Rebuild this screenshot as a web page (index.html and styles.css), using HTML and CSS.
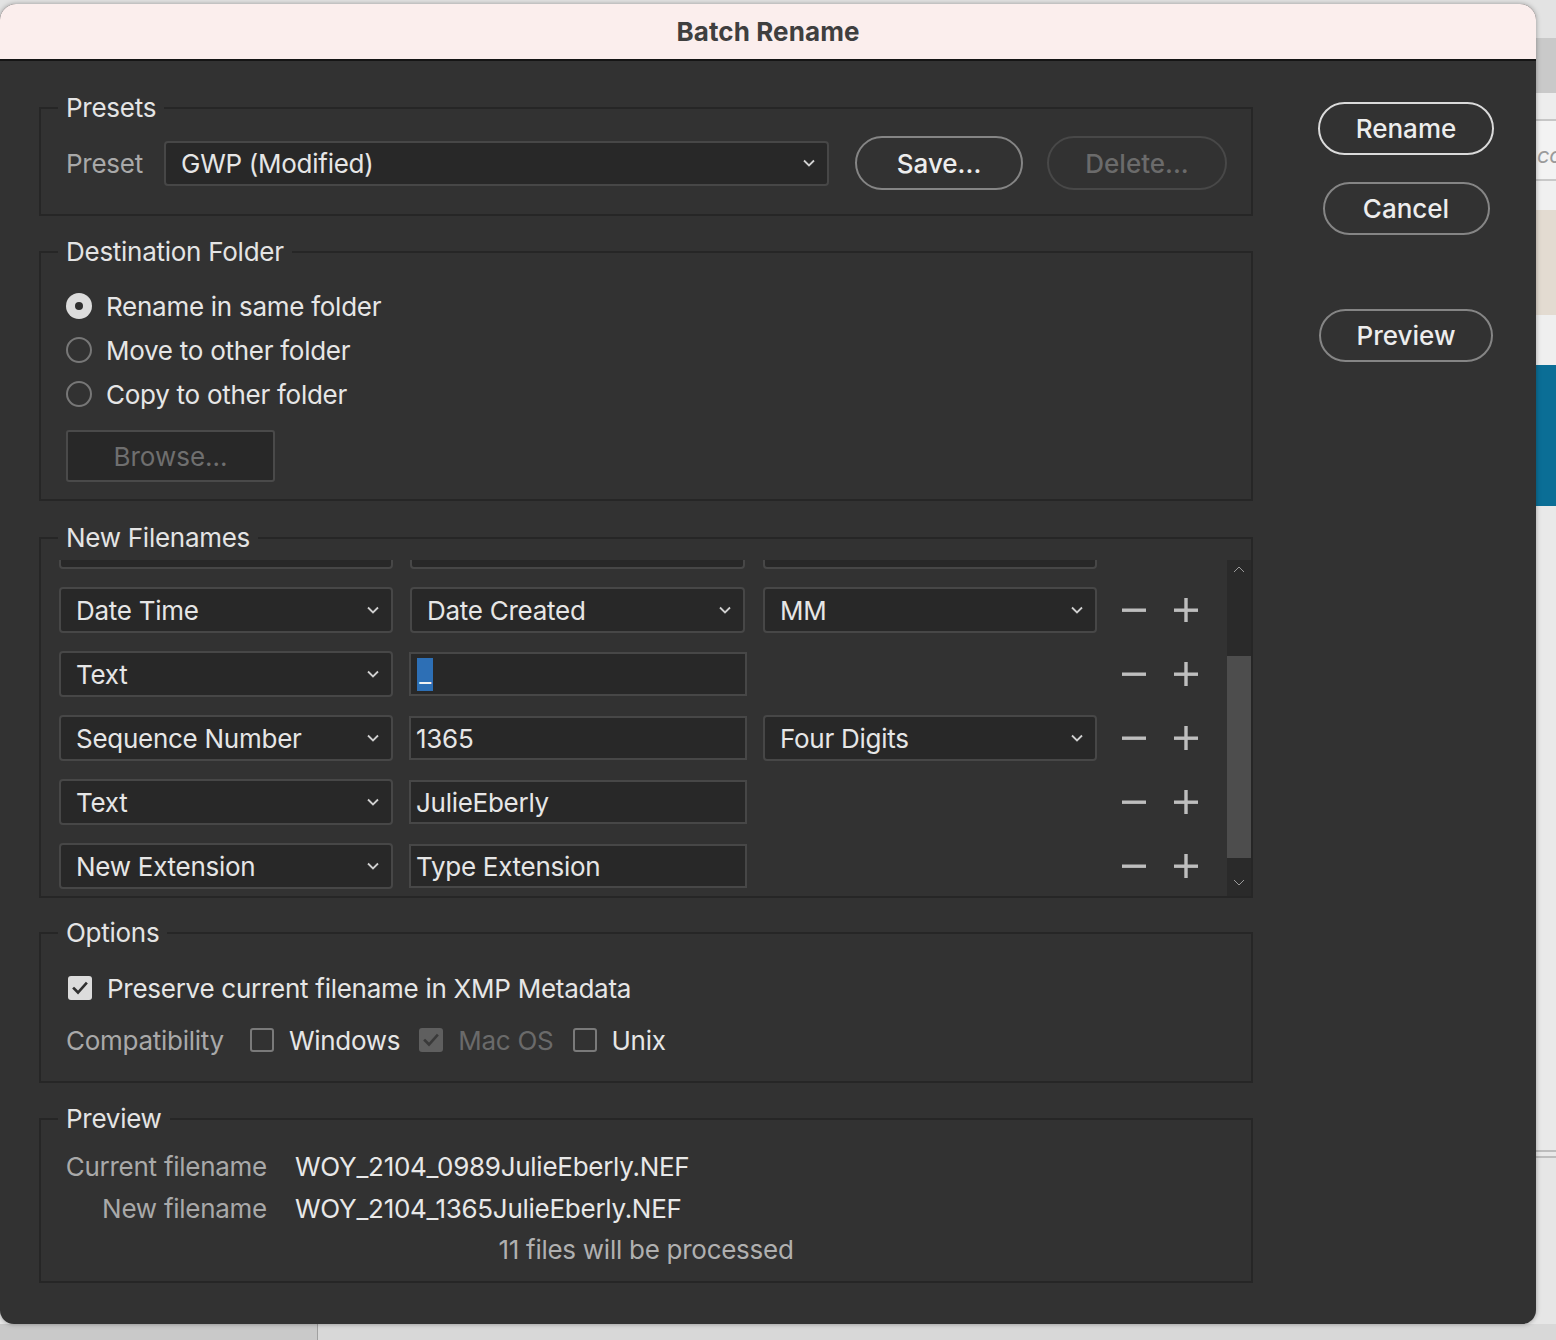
FILE: index.html
```html
<!DOCTYPE html>
<html lang="en">
<head>
<meta charset="utf-8">
<title>Batch Rename</title>
<link rel="stylesheet" href="styles.css">
</head>
<body>
<span class="backdrop-text">co</span>
<div class="dialog">
  <div class="titlebar">Batch Rename</div>
  <div class="dlg-body">
    <div class="groups">

      <fieldset class="group g-presets">
        <legend>Presets</legend>
        <div class="preset-row">
          <span class="lbl">Preset</span>
          <div class="select preset-select"><span>GWP (Modified)</span>
            <svg class="chev" viewBox="0 0 12 8" width="12" height="8"><path d="M1 1.5L6 6.5L11 1.5"/></svg>
          </div>
          <button class="pill save">Save...</button>
          <button class="pill off delete">Delete...</button>
        </div>
      </fieldset>

      <fieldset class="group g-dest">
        <legend>Destination Folder</legend>
        <div class="dest-inner">
          <div class="radio-row"><span class="radio on"></span><span>Rename in same folder</span></div>
          <div class="radio-row"><span class="radio"></span><span>Move to other folder</span></div>
          <div class="radio-row"><span class="radio"></span><span>Copy to other folder</span></div>
          <button class="browse">Browse...</button>
        </div>
      </fieldset>

      <fieldset class="group g-names">
        <legend>New Filenames</legend>
        <div class="scroller">
          <div class="rows">
            <div class="row" aria-hidden="true">
              <div class="select c1"><span></span><svg class="chev" viewBox="0 0 12 8" width="12" height="8"><path d="M1 1.5L6 6.5L11 1.5"/></svg></div>
              <div class="select c2"><span></span><svg class="chev" viewBox="0 0 12 8" width="12" height="8"><path d="M1 1.5L6 6.5L11 1.5"/></svg></div>
              <div class="select c3"><span></span><svg class="chev" viewBox="0 0 12 8" width="12" height="8"><path d="M1 1.5L6 6.5L11 1.5"/></svg></div>
              <svg class="pm minus" viewBox="0 0 24 24" width="24" height="24"><rect x="0" y="10.5" width="24" height="3.4"/></svg>
              <svg class="pm plus" viewBox="0 0 24 24" width="24" height="24"><rect x="0" y="10.5" width="24" height="3.4"/><rect x="10.3" y="0" width="3.4" height="24"/></svg>
            </div>
            <div class="row">
              <div class="select c1"><span>Date Time</span><svg class="chev" viewBox="0 0 12 8" width="12" height="8"><path d="M1 1.5L6 6.5L11 1.5"/></svg></div>
              <div class="select c2"><span>Date Created</span><svg class="chev" viewBox="0 0 12 8" width="12" height="8"><path d="M1 1.5L6 6.5L11 1.5"/></svg></div>
              <div class="select c3"><span>MM</span><svg class="chev" viewBox="0 0 12 8" width="12" height="8"><path d="M1 1.5L6 6.5L11 1.5"/></svg></div>
              <svg class="pm minus" viewBox="0 0 24 24" width="24" height="24"><rect x="0" y="10.5" width="24" height="3.4"/></svg>
              <svg class="pm plus" viewBox="0 0 24 24" width="24" height="24"><rect x="0" y="10.5" width="24" height="3.4"/><rect x="10.3" y="0" width="3.4" height="24"/></svg>
            </div>
            <div class="row">
              <div class="select c1"><span>Text</span><svg class="chev" viewBox="0 0 12 8" width="12" height="8"><path d="M1 1.5L6 6.5L11 1.5"/></svg></div>
              <div class="field c2"><span class="sel">_</span></div>
              <div class="spacer c3"></div>
              <svg class="pm minus" viewBox="0 0 24 24" width="24" height="24"><rect x="0" y="10.5" width="24" height="3.4"/></svg>
              <svg class="pm plus" viewBox="0 0 24 24" width="24" height="24"><rect x="0" y="10.5" width="24" height="3.4"/><rect x="10.3" y="0" width="3.4" height="24"/></svg>
            </div>
            <div class="row">
              <div class="select c1"><span>Sequence Number</span><svg class="chev" viewBox="0 0 12 8" width="12" height="8"><path d="M1 1.5L6 6.5L11 1.5"/></svg></div>
              <div class="field c2"><span>1365</span></div>
              <div class="select c3"><span>Four Digits</span><svg class="chev" viewBox="0 0 12 8" width="12" height="8"><path d="M1 1.5L6 6.5L11 1.5"/></svg></div>
              <svg class="pm minus" viewBox="0 0 24 24" width="24" height="24"><rect x="0" y="10.5" width="24" height="3.4"/></svg>
              <svg class="pm plus" viewBox="0 0 24 24" width="24" height="24"><rect x="0" y="10.5" width="24" height="3.4"/><rect x="10.3" y="0" width="3.4" height="24"/></svg>
            </div>
            <div class="row">
              <div class="select c1"><span>Text</span><svg class="chev" viewBox="0 0 12 8" width="12" height="8"><path d="M1 1.5L6 6.5L11 1.5"/></svg></div>
              <div class="field c2"><span>JulieEberly</span></div>
              <div class="spacer c3"></div>
              <svg class="pm minus" viewBox="0 0 24 24" width="24" height="24"><rect x="0" y="10.5" width="24" height="3.4"/></svg>
              <svg class="pm plus" viewBox="0 0 24 24" width="24" height="24"><rect x="0" y="10.5" width="24" height="3.4"/><rect x="10.3" y="0" width="3.4" height="24"/></svg>
            </div>
            <div class="row">
              <div class="select c1"><span>New Extension</span><svg class="chev" viewBox="0 0 12 8" width="12" height="8"><path d="M1 1.5L6 6.5L11 1.5"/></svg></div>
              <div class="field c2"><span>Type Extension</span></div>
              <div class="spacer c3"></div>
              <svg class="pm minus" viewBox="0 0 24 24" width="24" height="24"><rect x="0" y="10.5" width="24" height="3.4"/></svg>
              <svg class="pm plus" viewBox="0 0 24 24" width="24" height="24"><rect x="0" y="10.5" width="24" height="3.4"/><rect x="10.3" y="0" width="3.4" height="24"/></svg>
            </div>
          </div>
          <div class="scrollbar">
            <svg class="sb-arrow" viewBox="0 0 12 7" width="12" height="7"><path d="M1 6L6 1L11 6"/></svg>
            <div class="thumb"></div>
            <svg class="sb-arrow down" viewBox="0 0 12 7" width="12" height="7"><path d="M1 1L6 6L11 1"/></svg>
          </div>
        </div>
      </fieldset>

      <fieldset class="group g-options">
        <legend>Options</legend>
        <div class="opt-row">
          <span class="cb on"><svg viewBox="0 0 24 24" width="24" height="24"><path d="M6 12.5L10 16.5L18 7.5"/></svg></span>
          <span class="cb-text">Preserve current filename in XMP Metadata</span>
        </div>
        <div class="opt-row compat">
          <span class="lbl">Compatibility</span>
          <span class="cb"></span><span class="cb-text">Windows</span>
          <span class="cb dis"><svg viewBox="0 0 24 24" width="24" height="24"><path d="M6 12.5L10 16.5L18 7.5"/></svg></span><span class="cb-text dim">Mac OS</span>
          <span class="cb"></span><span class="cb-text">Unix</span>
        </div>
      </fieldset>

      <fieldset class="group g-preview">
        <legend>Preview</legend>
        <div class="pv-grid">
          <span class="lbl">Current filename</span><span class="val">WOY_2104_0989JulieEberly.NEF</span>
          <span class="lbl">New filename</span><span class="val">WOY_2104_1365JulieEberly.NEF</span>
        </div>
        <div class="pv-count">11 files will be processed</div>
      </fieldset>

    </div>
    <div class="actions">
      <button class="pill main rename">Rename</button>
      <button class="pill cancel">Cancel</button>
      <button class="pill preview">Preview</button>
    </div>
  </div>
</div>
</body>
</html>
```
FILE: styles.css
```css
* { box-sizing: border-box; }

body {
  margin: 0;
  width: 1556px;
  height: 1340px;
  overflow: hidden;
  position: relative;
  font-family: Inter, "Noto Sans", sans-serif;
  font-size: 26px;
  letter-spacing: -0.27px;
  color: #e6e6e6;
  background:
    linear-gradient(to right, #c9c9c9 0 317px, #a0a0a0 317px 318px, #d8d8d8 318px) left bottom / 100% 16px no-repeat,
    linear-gradient(to bottom,
      #e3e3e3 0 38px, #c9c9c9 38px 93px, #ededed 93px 119px, #c6c6c6 119px 121px,
      #f3f3f3 121px 179px, #c8c8c8 179px 181px, #f0f0f0 181px 210px,
      #e3dbd1 210px 315px, #efefef 315px 365px, #0b6e96 365px 506px,
      #e9e9e9 506px 1150px, #bdbdbd 1150px 1152px, #e9e9e9 1152px 1156px,
      #bdbdbd 1156px 1158px, #e6e6e6 1158px);
}

.backdrop-text {
  position: absolute;
  left: 1537px;
  top: 142px;
  font-size: 22px;
  font-style: italic;
  color: #9a9a9a;
}

.dialog {
  width: 1536px;
  height: 1320px;
  margin-top: 4px;
  background: #323232;
  border-radius: 16px 16px 14px 14px;
  overflow: hidden;
  box-shadow: 0 0 5px rgba(0, 0, 0, 0.35);
  display: flex;
  flex-direction: column;
}

.titlebar {
  flex: none;
  height: 57px;
  background: #fbeeed;
  border-bottom: 2px solid #151515;
  display: flex;
  align-items: center;
  justify-content: center;
  font-weight: 700;
  font-size: 26px;
  letter-spacing: 0.1px;
  color: #3f3f3f;
}

.dlg-body {
  flex: 1;
  display: flex;
  padding-left: 39px;
}

.groups {
  width: 1214px;
  padding-top: 32px;
  display: flex;
  flex-direction: column;
}

.group {
  margin: 0;
  padding: 0;
  min-width: 0;
  border: 2px solid #262626;
}

.group legend {
  margin-left: 17px;
  padding: 0 8px;
  font-size: 26px;
  line-height: 30px;
  color: #e4e4e4;
}

.lbl { color: #a9a9a9; }

/* Presets */
.preset-row {
  display: flex;
  align-items: center;
  padding: 13px 0 24px 25px;
}
.preset-row .lbl { width: 77px; flex: none; }
.preset-select {
  width: 665px;
  height: 45px;
  margin-left: 21px;
}
.pill {
  font: inherit;
  font-weight: 500;
  color: #ededed;
  background: transparent;
  border: 2px solid #858585;
  border-radius: 28px;
  height: 54px;
  padding: 0;
}
.save { width: 168px; margin-left: 26px; }
.delete { width: 180px; margin-left: 24px; }
.pill.off { color: #6b6b6b; border-color: #484848; }

/* selects / fields */
.select {
  display: flex;
  align-items: center;
  justify-content: space-between;
  background: #282828;
  border: 2px solid #474747;
  border-radius: 4px;
  padding: 0 12px 0 15px;
  color: #e6e6e6;
  flex: none;
}
.chev {
  fill: none;
  stroke: #d0d0d0;
  stroke-width: 1.8;
}

/* Destination */
.g-dest { margin-top: 21px; }
.dest-inner { padding: 17px 0 17px 25px; }
.radio-row {
  height: 44px;
  display: flex;
  align-items: center;
  gap: 14px;
}
.radio {
  width: 26px;
  height: 26px;
  border-radius: 50%;
  border: 2px solid #777;
  flex: none;
  display: flex;
  align-items: center;
  justify-content: center;
}
.radio.on {
  border: none;
  background: #dcdcdc;
}
.radio.on::after {
  content: "";
  width: 8px;
  height: 8px;
  border-radius: 50%;
  background: #2e2e2e;
}
.browse {
  display: block;
  margin-top: 14px;
  width: 209px;
  height: 52px;
  background: #282828;
  border: 2px solid #4a4a4a;
  border-radius: 3px;
  font: inherit;
  color: #6f6f6f;
  padding: 0;
}

/* New filenames */
.g-names { margin-top: 22px; padding: 7px 0 0 0; }
.scroller {
  height: 336px;
  overflow: hidden;
  display: flex;
}
.rows {
  flex: 1;
  margin-top: -37px;
  display: flex;
  flex-direction: column;
  gap: 18px;
}
.row {
  display: flex;
  align-items: center;
  padding-left: 18px;
  height: 46px;
}
.row .select { height: 46px; }
.c1 { width: 334px; }
.c2 { width: 335px; margin-left: 17px; }
.c3 { width: 334px; margin-left: 18px; flex: none; }
.field {
  flex: none;
  height: 44px;
  width: 338px;
  margin-left: 16px;
  margin-right: -2px;
  background: #282828;
  border: 2px solid #474747;
  padding-left: 5px;
  display: flex;
  align-items: center;
  color: #e6e6e6;
}
.sel {
  background: #2d6fb5;
  color: #f2f2f2;
  width: 16px;
  height: 33px;
  line-height: 30px;
  text-align: center;
  margin-left: 1px;
}
.pm { fill: #bebebe; flex: none; }
.minus { margin-left: 25px; }
.plus { margin-left: 28px; }

.scrollbar {
  width: 24px;
  flex: none;
  background: #2a2a2a;
  display: flex;
  flex-direction: column;
  align-items: center;
}
.sb-arrow {
  fill: none;
  stroke: #9a9a9a;
  stroke-width: 1;
  margin-top: 6px;
}
.thumb {
  width: 24px;
  height: 202px;
  background: #4d4d4d;
  margin-top: 83px;
}
.sb-arrow.down { margin-top: 21px; }

/* Options */
.g-options { margin-top: 20px; padding: 18px 0 19px 0; }
.opt-row {
  height: 44px;
  display: flex;
  align-items: center;
  padding-left: 27px;
}
.opt-row.compat { margin-top: 8px; padding-left: 25px; }
.cb {
  width: 24px;
  height: 24px;
  border: 2px solid #7a7a7a;
  border-radius: 3px;
  flex: none;
  display: flex;
  align-items: center;
  justify-content: center;
}
.cb svg { fill: none; stroke: #303030; stroke-width: 2.6; stroke-linecap: square; }
.cb.on { background: #dcdcdc; border: none; }
.cb.dis { background: #5f5f5f; border: none; }
.cb.dis svg { stroke: #3a3a3a; }
.cb-text { margin-left: 15px; }
.cb-text.dim { color: #6a6a6a; }
.compat .lbl { margin-right: 26px; }
.compat .cb-text { margin-right: 19px; }

/* Preview */
.g-preview { margin-top: 21px; padding: 11px 0 10px 0; }
.pv-grid {
  display: grid;
  grid-template-columns: 226px auto;
  column-gap: 28px;
  grid-auto-rows: 42px;
  align-items: center;
}
.pv-grid .lbl { text-align: right; }
.pv-grid .val { color: #e8e8e8; }
.pv-count {
  height: 42px;
  line-height: 42px;
  text-align: center;
  color: #b0b0b0;
}

/* Actions */
.actions {
  width: 174px;
  margin-left: 66px;
  padding-top: 41px;
  display: flex;
  flex-direction: column;
  align-items: center;
}
.actions .pill { height: 53px; }
.rename { width: 176px; border-color: #dadada; flex: none; }
.cancel { width: 167px; margin-top: 27px; flex: none; }
.preview { width: 174px; margin-top: 74px; flex: none; }
```
